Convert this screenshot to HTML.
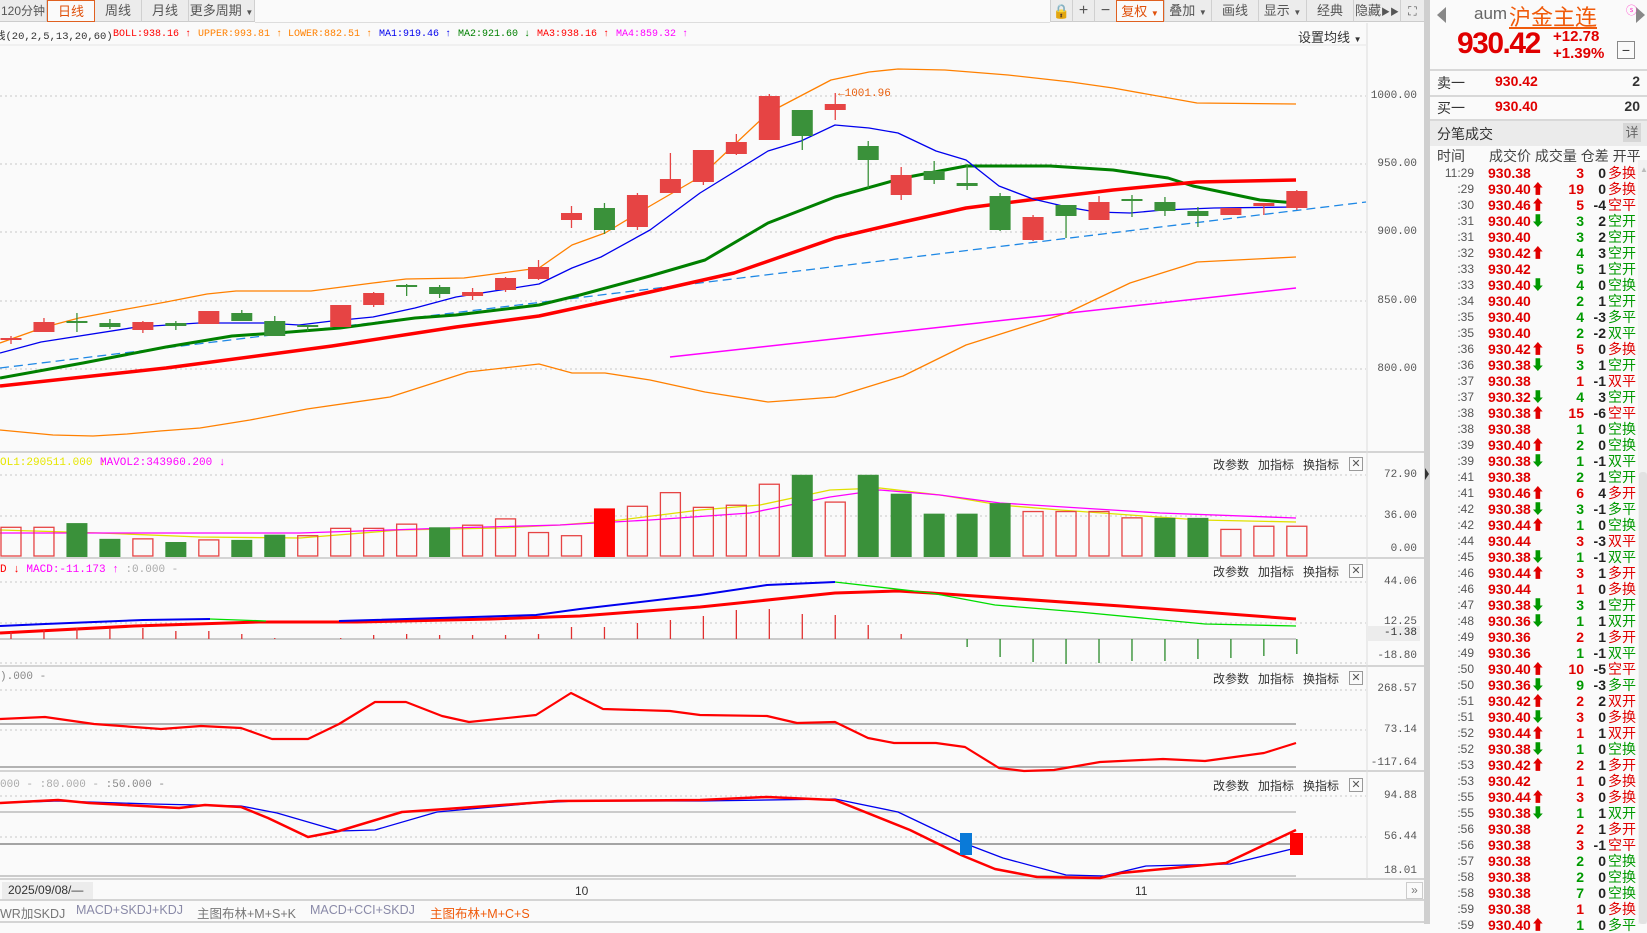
<!DOCTYPE html>
<html><head><meta charset="utf-8">
<style>
*{margin:0;padding:0;box-sizing:border-box}
body{width:1647px;height:924px;overflow:hidden;background:#fafafa;font-family:"Liberation Sans","Noto Sans CJK SC",sans-serif;position:relative}
.a{position:absolute;white-space:nowrap}
.mono{font-family:"Liberation Mono","Noto Sans CJK SC",monospace}
.tab{position:absolute;top:0;height:22px;background:#ececec;border-right:1px solid #d0d0d0;border-bottom:1px solid #ccc;font-size:13px;color:#555;text-align:center;line-height:22px}
.tb{position:absolute;top:0;height:22px;background:#ececec;border-left:1px solid #d0d0d0;border-bottom:1px solid #ccc;font-size:13px;color:#555;text-align:center;line-height:22px}
.hd{position:absolute;font-size:12px;color:#333}
.xb{position:absolute;width:14px;height:14px;border:1px solid #999;font-size:11px;line-height:12px;text-align:center;color:#555}
.ax{position:absolute;right:230px;font-size:11px;color:#555;font-family:"Liberation Mono",monospace;text-align:right}
.rw{position:absolute;left:1430px;width:210px;height:16px;font-size:14px;line-height:16px}
.rw span{position:absolute;top:0}
.t{right:166px;color:#555;font-size:12px}
.p{left:58px;color:#e00000;font-weight:bold}
.v{right:56px;font-weight:bold}
.c{right:34px;color:#222;font-weight:bold}
.k{left:178px;font-size:14px}
.R{color:#e00000}.G{color:#009900}
.lg{top:29px;font-size:10px}
</style></head><body>
<svg class="a" style="left:0;top:0" width="1430" height="924" xmlns="http://www.w3.org/2000/svg">
<g stroke="#c8c8c8" stroke-dasharray="2,3" stroke-width="1">
<line x1="0" y1="96" x2="1366" y2="96"/><line x1="0" y1="164" x2="1366" y2="164"/><line x1="0" y1="232" x2="1366" y2="232"/><line x1="0" y1="301" x2="1366" y2="301"/><line x1="0" y1="369" x2="1366" y2="369"/>
<line x1="0" y1="475" x2="1366" y2="475"/><line x1="0" y1="516" x2="1366" y2="516"/>
<line x1="0" y1="582" x2="1366" y2="582"/><line x1="0" y1="623" x2="1366" y2="623"/><line x1="0" y1="663" x2="1366" y2="663"/>
<line x1="0" y1="690" x2="1366" y2="690"/><line x1="0" y1="730" x2="1366" y2="730"/>
<line x1="0" y1="796" x2="1366" y2="796"/><line x1="0" y1="837" x2="1366" y2="837"/>
</g>
<line x1="0" y1="45" x2="1366" y2="45" stroke="#e6e6e6"/>
<g stroke="#d4d4d4" stroke-width="2">
<line x1="0" y1="452" x2="1424" y2="452"/><line x1="0" y1="558" x2="1424" y2="558"/><line x1="0" y1="666" x2="1424" y2="666"/><line x1="0" y1="771" x2="1424" y2="771"/><line x1="0" y1="879" x2="1424" y2="879"/><line x1="0" y1="900" x2="1424" y2="900"/><line x1="0" y1="922" x2="1424" y2="922"/>
</g>
<line x1="1367" y1="23" x2="1367" y2="879" stroke="#dcdcdc"/>
<rect x="1424" y="0" width="6" height="924" fill="#cfcfcf"/>
<path d="M1425 468 L1429 474 L1425 480Z" fill="#333"/>
<g stroke="#999" stroke-width="1.5">
<line x1="0" y1="724" x2="1296" y2="724"/><line x1="0" y1="767" x2="1296" y2="767"/>
<line x1="0" y1="812" x2="1296" y2="812" stroke="#bbb"/><line x1="0" y1="844" x2="1296" y2="844" stroke="#888"/>
<line x1="0" y1="876" x2="1296" y2="876" stroke="#bbb"/>
<line x1="0" y1="639" x2="1296" y2="639" stroke="#bbb"/>
</g>
<g fill="none" stroke-linejoin="round">
<polyline stroke="#ff8000" stroke-width="1.3" points="0,343 45,327 79,318 116,311 166,302 207,294 236,291 311,291 373,283 406,279 464,278 539,268 572,245 605,233 650,206 700,177 768,113 831,80 869,72 898,69 945,70 1008,75 1071,82 1113,88 1197,103 1296,104"/>
<polyline stroke="#ff8000" stroke-width="1.3" points="0,430 53,435 93,436 127,434 160,431 200,428 250,420 307,409 390,397 468,372 539,364 572,373 605,373 650,380 705,392 768,402 835,397 903,376 966,345 1067,313 1130,283 1197,262 1296,257"/>
<line x1="0" y1="368" x2="1366" y2="202" stroke="#1e88e5" stroke-width="1.3" stroke-dasharray="9,5"/>
<line x1="670" y1="357" x2="1296" y2="288" stroke="#ff00ff" stroke-width="1.5"/>
<polyline stroke="#008000" stroke-width="3" points="0,378 83,363 166,347 232,336 290,332 340,328 415,318 456,315 539,305 580,295 650,276 705,260 768,223 835,197 903,178 966,166 1050,166 1113,170 1168,178 1193,186 1260,200 1296,203"/>
<polyline stroke="#ff0000" stroke-width="3.5" points="0,386 166,368 332,346 456,327 539,316 650,292 734,273 835,238 903,222 966,208 1029,200 1113,190 1197,182 1296,180"/>
<polyline stroke="#0000ee" stroke-width="1.3" points="0,353 41,342 137,327 199,323 265,323 299,325 332,321 373,317 415,308 456,297 539,284 572,268 601,257 650,230 700,193 768,151 801,141 835,125 869,128 898,133 936,151 966,160 999,186 1033,199 1067,207 1096,212 1130,213 1163,210 1214,208 1296,207"/>
<polyline stroke="#e0e000" stroke-width="1.3" points="0,530 100,533 200,537 300,538 400,530 500,528 560,525 620,520 700,510 760,505 830,490 880,488 940,495 1000,505 1060,510 1130,515 1200,520 1296,522"/>
<polyline stroke="#ff00ff" stroke-width="1.3" points="0,533 150,533 300,533 450,528 560,525 650,520 750,513 830,497 880,490 940,495 1000,503 1080,508 1160,513 1296,518"/>
<polyline stroke="#ff0000" stroke-width="3" points="0,633 134,626 259,622 357,622 491,619 580,616 700,607 835,593 898,591 931,593 1121,606 1296,619"/>
<polyline stroke="#0000ee" stroke-width="2" points="0,626 45,624 143,620 210,619"/>
<polyline stroke="#00dd00" stroke-width="1.3" points="210,619 266,621"/>
<polyline stroke="#0000ee" stroke-width="2" points="339,621 473,617 536,615 580,609 700,595 767,585 835,582"/>
<polyline stroke="#00dd00" stroke-width="1.3" points="835,582 931,593 995,605 1079,612 1205,624 1296,626"/>
<polyline stroke="#ff0000" stroke-width="2.2" points="0,719 45,717 94,724 161,729 201,726 241,728 272,739 308,739 339,724 375,702 406,702 442,716 469,722 536,715 571,693 603,709 670,711 700,715 767,716 797,723 835,722 868,738 894,743 936,743 965,747 999,768 1024,771 1054,770 1100,762 1163,759 1205,761 1264,753 1296,743"/>
<polyline stroke="#0000ee" stroke-width="1.3" points="0,803 58,801 152,804 241,806 277,813 339,831 375,830 437,812 536,803 576,801 700,801 835,799 898,812 961,842 1003,858 1066,875 1104,876 1146,866 1230,864 1296,848"/>
<polyline stroke="#ff0000" stroke-width="2.5" points="0,803 58,800 89,803 179,808 205,805 241,807 268,818 308,837 339,831 402,812 446,809 558,801 700,800 767,797 835,800 910,830 961,855 995,869 1037,877 1100,878 1121,873 1226,863 1296,830"/>
</g>
<rect x="960" y="833" width="12" height="22" fill="#0a7ad8"/>
<rect x="1290" y="833" width="13" height="22" fill="#ff0000"/>
<g id="dyn"></g>
<text x="838" y="96" font-family="Liberation Mono" font-size="11" fill="#e86010">←1001.96</text>
</svg>
<script>
(function(){
var ns="http://www.w3.org/2000/svg",g=document.getElementById("dyn");
function el(t,a){var e=document.createElementNS(ns,t);for(var k in a)e.setAttribute(k,a[k]);g.appendChild(e);}
var C=[[338,340,336,344,'r'],[322,332,318,332,'r'],[321,323,313,332,'g'],[323,327,319,329,'g'],[322,330,321,333,'r'],[323,326,321,330,'g'],[311,324,311,324,'r'],[313,321,310,321,'g'],[321,336,316,336,'g'],[325,327,325,331,'g'],[305,327,305,327,'r'],[293,305,292,307,'r'],[285,287,284,296,'g'],[287,294,285,298,'g'],[292,296,288,300,'r'],[278,290,277,292,'r'],[267,279,260,280,'r'],[213,220,206,228,'r'],[208,230,203,234,'g'],[195,227,193,230,'r'],[179,193,153,193,'r'],[150,182,150,185,'r'],[142,154,134,155,'r'],[96,140,94,140,'r'],[110,136,110,150,'g'],[104,110,93,120,'r'],[146,160,141,188,'g'],[175,195,167,200,'r'],[171,180,161,184,'g'],[183,186,164,190,'g'],[196,230,193,231,'g'],[217,240,215,241,'r'],[205,216,205,238,'g'],[202,220,196,220,'r'],[199,201,195,217,'g'],[202,211,197,216,'g'],[211,216,207,227,'g'],[208,215,208,215,'r'],[203,206,203,215,'r'],[191,208,190,210,'r']];
var V=[502,502,498,513,513,516,514,514,509,510,503,503,499,502,500,494,507,510,484,482,469,483,481,461,452,478,452,470,489,489,479,487,487,487,493,493,493,504,501,501];
var T="hhggh"+"ghggh"+"hhhgh"+"hhhRh"+"hhhhg"+"hgggg"+"ghhhh"+"gghhh";
var M=[632,630,628,628,628,631,631,634,638,639,638,635,634,635,635,635,634,627,627,623,620,616,610,609,614,615,625,634,639,647,657,662,664,663,661,661,659,658,656,654];
for(var i=0;i<40;i++){var x=11+32.97*i,c=C[i],col=c[4]=='r'?'#e64444':'#3a913a';
el('line',{x1:x,y1:c[2],x2:x,y2:c[3],stroke:col,'stroke-width':1.3});
el('rect',{x:x-10.5,y:c[0],width:21,height:Math.max(2,c[1]-c[0]),fill:col});
var top=V[i]*1.0504,t=T[i];
if(t=='h')el('rect',{x:x-10,y:top,width:20,height:556-top,fill:'none',stroke:'#e64444','stroke-width':1.3});
else el('rect',{x:x-10.5,y:top,width:21,height:557-top,fill:t=='g'?'#3a913a':'#ff0000'});
var m=M[i];el('line',{x1:x,y1:639,x2:x,y2:m,stroke:m<639?'#e03030':'#2a8a2a','stroke-width':1.3});}
})();
</script>
<div class="tab" style="left:0;width:47px;font-size:12px">120分钟</div>
<div class="tab" style="left:47px;width:48px;background:#fafafa;border:1px solid #e06020;color:#e0500a">日线</div>
<div class="tab" style="left:95px;width:47px">周线</div>
<div class="tab" style="left:142px;width:47px">月线</div>
<div class="tab" style="left:189px;width:66px">更多周期 <span style="font-size:8px">▼</span></div>
<div class="a" style="left:255px;top:22px;width:795px;height:1px;background:#ddd"></div>
<div class="tb" style="left:1050px;width:22px;font-size:14px">🔒</div>
<div class="tb" style="left:1072px;width:22px;font-size:16px">+</div>
<div class="tb" style="left:1094px;width:22px;font-size:16px">−</div>
<div class="tb" style="left:1116px;width:48px;background:#fafafa;border:1px solid #e06020;color:#e0500a">复权 <span style="font-size:8px">▼</span></div>
<div class="tb" style="left:1164px;width:47px">叠加 <span style="font-size:8px">▼</span></div>
<div class="tb" style="left:1211px;width:47px">画线</div>
<div class="tb" style="left:1258px;width:48px">显示 <span style="font-size:8px">▼</span></div>
<div class="tb" style="left:1306px;width:47px">经典</div>
<div class="tb" style="left:1353px;width:47px">隐藏<span style="font-size:9px">▶▶</span></div>
<div class="tb" style="left:1400px;width:24px;font-size:12px">⛶</div>
<div class="a mono lg" style="left:-5px;color:#333;font-size:10.5px;top:28px">线(20,2,5,13,20,60)</div>
<div class="a mono lg" style="left:113px;color:#ff0000">BOLL:938.16 ↑</div>
<div class="a mono lg" style="left:198px;color:#ff8000">UPPER:993.81 ↑</div>
<div class="a mono lg" style="left:288px;color:#ff8000">LOWER:882.51 ↑</div>
<div class="a mono lg" style="left:379px;color:#0000ee">MA1:919.46 ↑</div>
<div class="a mono lg" style="left:458px;color:#008000">MA2:921.60 ↓</div>
<div class="a mono lg" style="left:537px;color:#ff0000">MA3:938.16 ↑</div>
<div class="a mono lg" style="left:616px;color:#ff00ff">MA4:859.32 ↑</div>
<div class="a" style="left:1298px;top:27px;font-size:13px;color:#333">设置均线 <span style="font-size:8px">▼</span></div>
<div class="ax" style="top:90px">1000.00</div>
<div class="ax" style="top:158px">950.00</div>
<div class="ax" style="top:226px">900.00</div>
<div class="ax" style="top:295px">850.00</div>
<div class="ax" style="top:363px">800.00</div>
<div class="ax" style="top:469px">72.90</div>
<div class="ax" style="top:510px">36.00</div>
<div class="ax" style="top:543px">0.00</div>
<div class="ax" style="top:576px">44.06</div>
<div class="ax" style="top:616px">12.25</div>
<div class="a" style="left:1367px;top:626px;width:53px;height:15px;background:#ececec"></div>
<div class="ax" style="top:627px;color:#333">-1.38</div>
<div class="ax" style="top:650px">-18.80</div>
<div class="ax" style="top:683px">268.57</div>
<div class="ax" style="top:724px">73.14</div>
<div class="ax" style="top:757px">-117.64</div>
<div class="ax" style="top:790px">94.88</div>
<div class="ax" style="top:831px">56.44</div>
<div class="ax" style="top:865px">18.01</div>
<div class="a mono" style="left:0;top:457px;font-size:11px;color:#e6e600">OL1:290511.000 ↓</div>
<div class="a mono" style="left:100px;top:457px;font-size:11px;color:#ff00ff">MAVOL2:343960.200 ↓</div>
<div class="a mono" style="left:0;top:564px;font-size:11px"><span style="color:#ff0000">D ↓</span> <span style="color:#ff00ff">MACD:-11.173 ↑</span> <span style="color:#aaa">:0.000 -</span></div>
<div class="a mono" style="left:0;top:671px;font-size:11px;color:#888">).000 -</div>
<div class="a mono" style="left:0;top:779px;font-size:11px;color:#aaa">000 - :80.000 - <span style="color:#888">:50.000 -</span></div>
<div class="hd" style="left:1213px;top:456px">改参数</div><div class="hd" style="left:1258px;top:456px">加指标</div><div class="hd" style="left:1303px;top:456px">换指标</div><div class="xb" style="left:1349px;top:457px">✕</div>
<div class="hd" style="left:1213px;top:563px">改参数</div><div class="hd" style="left:1258px;top:563px">加指标</div><div class="hd" style="left:1303px;top:563px">换指标</div><div class="xb" style="left:1349px;top:564px">✕</div>
<div class="hd" style="left:1213px;top:670px">改参数</div><div class="hd" style="left:1258px;top:670px">加指标</div><div class="hd" style="left:1303px;top:670px">换指标</div><div class="xb" style="left:1349px;top:671px">✕</div>
<div class="hd" style="left:1213px;top:777px">改参数</div><div class="hd" style="left:1258px;top:777px">加指标</div><div class="hd" style="left:1303px;top:777px">换指标</div><div class="xb" style="left:1349px;top:778px">✕</div>
<div class="a" style="left:2px;top:882px;width:91px;height:17px;background:#ececec;font-size:12px;color:#333;line-height:17px;padding-left:6px">2025/09/08/—</div>
<div class="a" style="left:575px;top:884px;font-size:12px;color:#333">10</div>
<div class="a" style="left:1135px;top:884px;font-size:12px;color:#333">11</div>
<div class="a" style="left:1406px;top:882px;width:17px;height:17px;border:1px solid #ccc;font-size:12px;color:#777;text-align:center;line-height:15px">»</div>
<div class="a" style="left:0;top:903px;font-size:12.5px;color:#777">WR加SKDJ</div>
<div class="a" style="left:76px;top:903px;font-size:12.5px;color:#8a8aa8">MACD+SKDJ+KDJ</div>
<div class="a" style="left:197px;top:903px;font-size:12.5px;color:#777">主图布林+M+S+K</div>
<div class="a" style="left:310px;top:903px;font-size:12.5px;color:#8a8aa8">MACD+CCI+SKDJ</div>
<div class="a" style="left:430px;top:903px;font-size:12.5px;color:#f05a0a">主图布林+M+C+S</div>
<div class="a" style="left:1437px;top:7px;width:0;height:0;border-top:8px solid transparent;border-bottom:8px solid transparent;border-right:9px solid #888"></div>
<div class="a" style="left:1636px;top:7px;width:0;height:0;border-top:8px solid transparent;border-bottom:8px solid transparent;border-left:9px solid #888"></div>
<div class="a" style="left:1474px;top:4px;font-size:17px;color:#666">aum</div>
<div class="a" style="left:1509px;top:0px;font-size:22px;color:#f05a0a;text-decoration:underline">沪金主连</div>
<div class="a" style="left:1626px;top:2px;font-size:11px;color:#ff44cc">ⓢ</div>
<div class="a" style="left:1457px;top:27px;font-size:30px;color:#e00000;font-weight:bold;letter-spacing:-1.5px">930.42</div>
<div class="a" style="left:1553px;top:28px;font-size:15px;color:#e00000;font-weight:bold">+12.78</div>
<div class="a" style="left:1553px;top:45px;font-size:15px;color:#e00000;font-weight:bold">+1.39%</div>
<div class="a" style="left:1617px;top:41px;width:18px;height:18px;border:1px solid #888;text-align:center;font-size:14px;line-height:16px;color:#333">−</div>
<div class="a" style="left:1430px;top:69px;width:217px;height:2px;background:#d8d8d8"></div>
<div class="a" style="left:1437px;top:73px;font-size:14px;color:#333">卖一</div>
<div class="a" style="left:1495px;top:73px;font-size:14px;color:#e00000;font-weight:bold">930.42</div>
<div class="a" style="right:7px;top:73px;font-size:14px;color:#333;font-weight:bold">2</div>
<div class="a" style="left:1430px;top:95px;width:217px;height:2px;background:#d8d8d8"></div>
<div class="a" style="left:1437px;top:98px;font-size:14px;color:#333">买一</div>
<div class="a" style="left:1495px;top:98px;font-size:14px;color:#e00000;font-weight:bold">930.40</div>
<div class="a" style="right:7px;top:98px;font-size:14px;color:#333;font-weight:bold">20</div>
<div class="a" style="left:1430px;top:119px;width:217px;height:27px;background:#ebebeb;border-top:2px solid #d8d8d8"></div>
<div class="a" style="left:1437px;top:124px;font-size:14px;color:#333">分笔成交</div>
<div class="a" style="left:1623px;top:123px;width:18px;height:19px;background:#d6d6d6;font-size:13px;color:#666;text-align:center;line-height:19px">详</div>
<div class="a" style="left:1437px;top:146px;font-size:14px;color:#444">时间</div>
<div class="a" style="left:1489px;top:146px;font-size:14px;color:#444">成交价 成交量 仓差 开平</div>
<div class="a" style="left:1638px;top:160px;width:9px;height:764px;background:#f2f2f2"></div>
<div class="a" style="left:1640px;top:165px;font-size:8px;color:#bbb">▲</div>
<div class="a" style="left:1639px;top:472px;width:8px;height:452px;background:#e2e2e2;border-radius:3px"></div>
<div id="rows">
<div class="rw" style="top:165px"><span class="t">11:29</span><span class="p">930.38</span><span class="v R">3</span><span class="c">0</span><span class="k R">多换</span></div>
<div class="rw" style="top:181px"><span class="t">:29</span><span class="p">930.40⬆</span><span class="v R">19</span><span class="c">0</span><span class="k R">多换</span></div>
<div class="rw" style="top:197px"><span class="t">:30</span><span class="p">930.46⬆</span><span class="v R">5</span><span class="c">-4</span><span class="k R">空平</span></div>
<div class="rw" style="top:213px"><span class="t">:31</span><span class="p">930.40<b class="G">⬇</b></span><span class="v G">3</span><span class="c">2</span><span class="k G">空开</span></div>
<div class="rw" style="top:229px"><span class="t">:31</span><span class="p">930.40</span><span class="v G">3</span><span class="c">2</span><span class="k G">空开</span></div>
<div class="rw" style="top:245px"><span class="t">:32</span><span class="p">930.42⬆</span><span class="v G">4</span><span class="c">3</span><span class="k G">空开</span></div>
<div class="rw" style="top:261px"><span class="t">:33</span><span class="p">930.42</span><span class="v G">5</span><span class="c">1</span><span class="k G">空开</span></div>
<div class="rw" style="top:277px"><span class="t">:33</span><span class="p">930.40<b class="G">⬇</b></span><span class="v G">4</span><span class="c">0</span><span class="k G">空换</span></div>
<div class="rw" style="top:293px"><span class="t">:34</span><span class="p">930.40</span><span class="v G">2</span><span class="c">1</span><span class="k G">空开</span></div>
<div class="rw" style="top:309px"><span class="t">:35</span><span class="p">930.40</span><span class="v G">4</span><span class="c">-3</span><span class="k G">多平</span></div>
<div class="rw" style="top:325px"><span class="t">:35</span><span class="p">930.40</span><span class="v G">2</span><span class="c">-2</span><span class="k G">双平</span></div>
<div class="rw" style="top:341px"><span class="t">:36</span><span class="p">930.42⬆</span><span class="v R">5</span><span class="c">0</span><span class="k R">多换</span></div>
<div class="rw" style="top:357px"><span class="t">:36</span><span class="p">930.38<b class="G">⬇</b></span><span class="v G">3</span><span class="c">1</span><span class="k G">空开</span></div>
<div class="rw" style="top:373px"><span class="t">:37</span><span class="p">930.38</span><span class="v R">1</span><span class="c">-1</span><span class="k R">双平</span></div>
<div class="rw" style="top:389px"><span class="t">:37</span><span class="p">930.32<b class="G">⬇</b></span><span class="v G">4</span><span class="c">3</span><span class="k G">空开</span></div>
<div class="rw" style="top:405px"><span class="t">:38</span><span class="p">930.38⬆</span><span class="v R">15</span><span class="c">-6</span><span class="k R">空平</span></div>
<div class="rw" style="top:421px"><span class="t">:38</span><span class="p">930.38</span><span class="v G">1</span><span class="c">0</span><span class="k G">空换</span></div>
<div class="rw" style="top:437px"><span class="t">:39</span><span class="p">930.40⬆</span><span class="v G">2</span><span class="c">0</span><span class="k G">空换</span></div>
<div class="rw" style="top:453px"><span class="t">:39</span><span class="p">930.38<b class="G">⬇</b></span><span class="v G">1</span><span class="c">-1</span><span class="k G">双平</span></div>
<div class="rw" style="top:469px"><span class="t">:41</span><span class="p">930.38</span><span class="v G">2</span><span class="c">1</span><span class="k G">空开</span></div>
<div class="rw" style="top:485px"><span class="t">:41</span><span class="p">930.46⬆</span><span class="v R">6</span><span class="c">4</span><span class="k R">多开</span></div>
<div class="rw" style="top:501px"><span class="t">:42</span><span class="p">930.38<b class="G">⬇</b></span><span class="v G">3</span><span class="c">-1</span><span class="k G">多平</span></div>
<div class="rw" style="top:517px"><span class="t">:42</span><span class="p">930.44⬆</span><span class="v G">1</span><span class="c">0</span><span class="k G">空换</span></div>
<div class="rw" style="top:533px"><span class="t">:44</span><span class="p">930.44</span><span class="v R">3</span><span class="c">-3</span><span class="k R">双平</span></div>
<div class="rw" style="top:549px"><span class="t">:45</span><span class="p">930.38<b class="G">⬇</b></span><span class="v G">1</span><span class="c">-1</span><span class="k G">双平</span></div>
<div class="rw" style="top:565px"><span class="t">:46</span><span class="p">930.44⬆</span><span class="v R">3</span><span class="c">1</span><span class="k R">多开</span></div>
<div class="rw" style="top:581px"><span class="t">:46</span><span class="p">930.44</span><span class="v R">1</span><span class="c">0</span><span class="k R">多换</span></div>
<div class="rw" style="top:597px"><span class="t">:47</span><span class="p">930.38<b class="G">⬇</b></span><span class="v G">3</span><span class="c">1</span><span class="k G">空开</span></div>
<div class="rw" style="top:613px"><span class="t">:48</span><span class="p">930.36<b class="G">⬇</b></span><span class="v G">1</span><span class="c">1</span><span class="k G">双开</span></div>
<div class="rw" style="top:629px"><span class="t">:49</span><span class="p">930.36</span><span class="v R">2</span><span class="c">1</span><span class="k R">多开</span></div>
<div class="rw" style="top:645px"><span class="t">:49</span><span class="p">930.36</span><span class="v G">1</span><span class="c">-1</span><span class="k G">双平</span></div>
<div class="rw" style="top:661px"><span class="t">:50</span><span class="p">930.40⬆</span><span class="v R">10</span><span class="c">-5</span><span class="k R">空平</span></div>
<div class="rw" style="top:677px"><span class="t">:50</span><span class="p">930.36<b class="G">⬇</b></span><span class="v G">9</span><span class="c">-3</span><span class="k G">多平</span></div>
<div class="rw" style="top:693px"><span class="t">:51</span><span class="p">930.42⬆</span><span class="v R">2</span><span class="c">2</span><span class="k R">双开</span></div>
<div class="rw" style="top:709px"><span class="t">:51</span><span class="p">930.40<b class="G">⬇</b></span><span class="v R">3</span><span class="c">0</span><span class="k R">多换</span></div>
<div class="rw" style="top:725px"><span class="t">:52</span><span class="p">930.44⬆</span><span class="v R">1</span><span class="c">1</span><span class="k R">双开</span></div>
<div class="rw" style="top:741px"><span class="t">:52</span><span class="p">930.38<b class="G">⬇</b></span><span class="v G">1</span><span class="c">0</span><span class="k G">空换</span></div>
<div class="rw" style="top:757px"><span class="t">:53</span><span class="p">930.42⬆</span><span class="v R">2</span><span class="c">1</span><span class="k R">多开</span></div>
<div class="rw" style="top:773px"><span class="t">:53</span><span class="p">930.42</span><span class="v R">1</span><span class="c">0</span><span class="k R">多换</span></div>
<div class="rw" style="top:789px"><span class="t">:55</span><span class="p">930.44⬆</span><span class="v R">3</span><span class="c">0</span><span class="k R">多换</span></div>
<div class="rw" style="top:805px"><span class="t">:55</span><span class="p">930.38<b class="G">⬇</b></span><span class="v G">1</span><span class="c">1</span><span class="k G">双开</span></div>
<div class="rw" style="top:821px"><span class="t">:56</span><span class="p">930.38</span><span class="v R">2</span><span class="c">1</span><span class="k R">多开</span></div>
<div class="rw" style="top:837px"><span class="t">:56</span><span class="p">930.38</span><span class="v R">3</span><span class="c">-1</span><span class="k R">空平</span></div>
<div class="rw" style="top:853px"><span class="t">:57</span><span class="p">930.38</span><span class="v G">2</span><span class="c">0</span><span class="k G">空换</span></div>
<div class="rw" style="top:869px"><span class="t">:58</span><span class="p">930.38</span><span class="v G">2</span><span class="c">0</span><span class="k G">空换</span></div>
<div class="rw" style="top:885px"><span class="t">:58</span><span class="p">930.38</span><span class="v G">7</span><span class="c">0</span><span class="k G">空换</span></div>
<div class="rw" style="top:901px"><span class="t">:59</span><span class="p">930.38</span><span class="v R">1</span><span class="c">0</span><span class="k R">多换</span></div>
<div class="rw" style="top:917px"><span class="t">:59</span><span class="p">930.40⬆</span><span class="v G">1</span><span class="c">0</span><span class="k G">多平</span></div>
</div>
</body></html>
